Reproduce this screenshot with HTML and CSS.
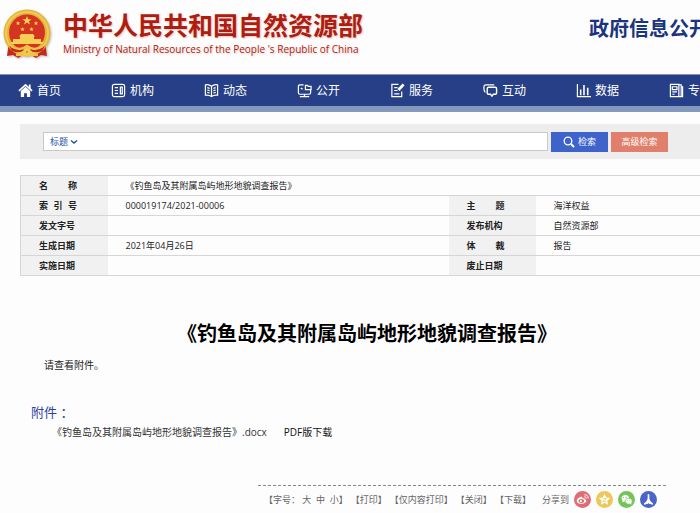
FILE: index.html
```html
<!DOCTYPE html>
<html lang="zh-CN">
<head>
<meta charset="utf-8">
<title>中华人民共和国自然资源部</title>
<link rel="stylesheet" href="styles.css">
</head>
<body>
<header class="header">
  <svg class="emblem" viewBox="0 0 50 54" aria-hidden="true">
    <path d="M7 33 5 48l6-1 5 3 5-3h8l5 3 5-3 6 1-2-15z" fill="#c42a1c"/>
    <circle cx="25" cy="25" r="23.5" fill="#e2b437"/>
    <circle cx="25" cy="25" r="21" fill="none" stroke="#f0cb57" stroke-width="2"/>
    <circle cx="25" cy="24.500" r="18" fill="#d53423"/>
    <path d="m25 8 1.200 3.200h3.400l-2.700 2 1 3.300-2.900-2-2.900 2 1-3.300-2.700-2h3.400z" fill="#ffd84b"/>
    <path d="m16 13 .6 1.400 1.500.1-1.100 1 .4 1.500-1.400-.8-1.300.8.3-1.500-1.100-1 1.500-.1zM34 13l.6 1.400 1.500.1-1.100 1 .4 1.500-1.400-.8-1.300.8.3-1.500-1.100-1 1.500-.1zM20.500 19l.6 1.400 1.500.1-1.100 1 .4 1.500-1.400-.8-1.300.8.3-1.500-1.100-1 1.500-.1zM29.500 19l.6 1.400 1.500.1-1.100 1 .4 1.500-1.400-.8-1.300.8.3-1.500-1.100-1 1.500-.1z" fill="#ffd84b"/>
    <path d="M19 26h12l2 2.500h-1V31h7v3h2v2H9v-2h2v-3h7v-2.500h-1z" fill="#f6cf54"/>
    <path d="M7 38q10 5 18 0 8 5 18 0l-3 5q-8 3-15-1-7 4-15 1z" fill="#c42a1c"/>
    <path d="M9 38q9 6 16 0 7 6 16 0M14 47q7 0 11-6 4 6 11 6" fill="none" stroke="#edc247" stroke-width="2.500"/>
    <path d="M17 48h16l-3-5H20z" fill="#edc247"/>
    <circle cx="25" cy="44" r="4" fill="#f0c94e"/>
    <circle cx="25" cy="44" r="1" fill="#c98b25"/>
  </svg>
  <div class="brand">
    <h1 class="brand-name">中华人民共和国自然资源部</h1>
    <p class="brand-en">Ministry of Natural Resources of the People 's Republic of China</p>
  </div>
  <p class="section-name">政府信息公开</p>
</header>

<nav class="nav">
  <a class="nav-item" href="#"><svg class="nav-icon" viewBox="0 0 16 16"><path d="M1 8.500 8 2l7 6.500" fill="none" stroke="#fff" stroke-width="1.800"/><path d="M11.500 1.500h2V7l-2-2zM3 8.500l5-4.500 5 4.500V15H9.500v-4h-3v4H3z" fill="#fff"/></svg>首页</a>
  <a class="nav-item" href="#"><svg class="nav-icon line" viewBox="0 0 16 16"><rect x="1.500" y="1.500" width="13" height="13" rx="2"/><path d="M4 5h3.500M4 8h3.500M4 11h3.500M10 4.500h2v7h-2z"/></svg>机构</a>
  <a class="nav-item" href="#"><svg class="nav-icon line" viewBox="0 0 16 16"><path d="M8 3.500Q5 1 1.500 2v11q4-.5 6.500 1.500 2.500-2 6.500-1.500V2Q11 1 8 3.500zv11M3.500 5l2.500.7M3.500 7.500l2.500.7M3.500 10l2.500.7M12.500 5l-2.500.7M12.500 7.500l-2.500.7M12.500 10l-2.500.7"/></svg>动态</a>
  <a class="nav-item" href="#"><svg class="nav-icon line" viewBox="0 0 16 16"><path d="M7 2H3Q1.500 2 1.500 3.500v7Q1.500 12 3 12h10q1.500 0 1.500-1.500V7M9 2.500h2l1 1h3V7H9zM4 5.500l2 1M8 12v2.500M3 14.500h10"/></svg>公开</a>
  <a class="nav-item" href="#"><svg class="nav-icon line" viewBox="0 0 16 16"><path d="M9 1.500H2v13h10.500V9M4.500 5H8M4.500 8H8M4.500 11.500H10"/><path d="m9 7.500 5.500-6" stroke-width="3"/></svg>服务</a>
  <a class="nav-item" href="#"><svg class="nav-icon line" viewBox="0 0 16 16"><path d="M2.500 10Q1 8.500 1 6V4q0-2 2-2h9"/><path d="M6 4.500h7q1.500 0 1.500 1.500v4q0 2-2 2H11l-1.500 2L8 12H6.500q-2 0-2-2V6Q4.500 4.500 6 4.500z" stroke-width="1.500"/></svg>互动</a>
  <a class="nav-item" href="#"><svg class="nav-icon line" viewBox="0 0 16 16"><path d="M1.500 1v13.500H16"/><path d="M5 7v6M8.500 2v11M12.500 5v8" stroke-width="1.700"/></svg>数据</a>
  <a class="nav-item" href="#"><svg class="nav-icon line" viewBox="0 0 16 16"><path d="M1.500 1.500h9v13h-9zM10.500 2h2.500v12.500h-2.500M13 4h1.500v10.500H13M3.500 4h5v3h-5zM3.500 9.500h5M3.500 12H6"/></svg>专</a>
</nav>

<main class="main">
  <form class="search">
    <div class="search-field">
      <label class="search-type">
        <select class="type-select" aria-label="检索范围"><option>标题</option></select>
        <svg class="chevron" viewBox="0 0 8 6"><path d="m1 1.500 3 2.500 3-2.500" fill="none" stroke="#2450a8" stroke-width="1.500"/></svg>
      </label>
      <input class="search-input" type="text" aria-label="检索词">
    </div>
    <button class="btn" type="button"><svg class="btn-icon" viewBox="0 0 12 12"><circle cx="5" cy="5" r="3.800" fill="none" stroke="#fff" stroke-width="1.300"/><path d="m8 8 3 3" stroke="#fff" stroke-width="2"/></svg>检索</button>
    <button class="btn btn-advanced" type="button">高级检索</button>
  </form>

  <table class="info">
    <colgroup><col class="col-label"><col class="col-wide"><col class="col-label"><col></colgroup>
    <tr><th scope="row"><span class="label">名<i></i>称</span></th><td colspan="3">《钓鱼岛及其附属岛屿地形地貌调查报告》</td></tr>
    <tr><th scope="row"><span class="label">索<i></i>引<i></i>号</span></th><td>000019174/2021-00006</td><th scope="row"><span class="label">主<i></i>题</span></th><td>海洋权益</td></tr>
    <tr><th scope="row">发文字号</th><td></td><th scope="row">发布机构</th><td>自然资源部</td></tr>
    <tr><th scope="row">生成日期</th><td>2021年04月26日</td><th scope="row"><span class="label">体<i></i>裁</span></th><td>报告</td></tr>
    <tr><th scope="row">实施日期</th><td></td><th scope="row">废止日期</th><td></td></tr>
  </table>

  <article class="article">
    <h2 class="title">《钓鱼岛及其附属岛屿地形地貌调查报告》</h2>
    <p class="text">请查看附件。</p>
    <h3 class="files-title">附件 ：</h3>
    <p class="files"><a class="file" href="#">《钓鱼岛及其附属岛屿地形地貌调查报告》.docx</a><a class="file file-pdf" href="#">PDF版下载</a></p>
  </article>

  <footer class="tools">
    <span class="font-size">【字号： <a href="#">大</a> &nbsp;<a href="#">中</a> &nbsp;<a href="#">小</a>】</span>
    <a href="#">【打印】</a>
    <a href="#">【仅内容打印】</a>
    <a href="#">【关闭】</a>
    <a href="#">【下载】</a>
    <div class="share">
      <span>分享到</span>
      <a href="#" aria-label="微博"><svg class="share-icon" viewBox="0 0 18 18"><circle cx="9" cy="9" r="9" fill="#e16b72"/><path d="M7.500 6C5 6.500 2.500 9 3 11c.5 2 3.500 3 6 2.500s4.500-2 4-3.500c-.3-1-1.500-1-1.500-1s.5-2-2.500-1C9 6.500 8.500 5.800 7.500 6z" fill="#fff"/><ellipse cx="7.800" cy="10.600" rx="3" ry="2" fill="#e16b72"/><circle cx="7.300" cy="10.700" r="1.100" fill="#fff"/><path d="M11 4q4-.5 4 4M11 6q2-.2 2 2" fill="none" stroke="#fff"/></svg></a>
      <a href="#" aria-label="QQ空间"><svg class="share-icon" viewBox="0 0 18 18"><circle cx="9" cy="9" r="9" fill="#ecc85b"/><path d="m9 3 1.800 3.800 4.200.6-3 2.900.7 4.200L9 12.500l-3.700 2 .7-4.200-3-2.900 4.200-.6z" fill="#fff"/><path d="M7 8h4l-4 3h4" fill="none" stroke="#ecc85b" stroke-width=".8"/></svg></a>
      <a href="#" aria-label="微信"><svg class="share-icon" viewBox="0 0 18 18"><circle cx="9" cy="9" r="9" fill="#73c557"/><path d="m4.500 12 .3-2a4 3.500 0 1 1 2 1z" fill="#fff"/><ellipse cx="11.300" cy="10.800" rx="3.700" ry="3" fill="#fff" stroke="#73c557" stroke-width=".7"/><path d="m12 13 2 1.500v-2.500z" fill="#fff"/><g fill="#73c557"><circle cx="5.800" cy="6.800" r=".6"/><circle cx="8.500" cy="6.800" r=".6"/><circle cx="10.200" cy="10.200" r=".5"/><circle cx="12.500" cy="10.200" r=".5"/></g></svg></a>
      <a href="#" aria-label="人人网"><svg class="share-icon" viewBox="0 0 18 18"><circle cx="9" cy="9" r="9" fill="#4a64c8"/><path d="M9 3.500v4q-.3 4-4.500 6.500M9 7.500q.3 4 4.500 6.500M7 13.500l2-2 2 2" fill="none" stroke="#fff" stroke-width="1.800"/></svg></a>
    </div>
  </footer>
</main>
</body>
</html>
```
FILE: styles.css
```css
* {
  box-sizing: border-box;
}

body {
  margin: 0;
  overflow: hidden;
  background: #fdfdfd;
  color: #222;
  font: 9px/16px "Open Sans", "Noto Sans CJK SC", sans-serif;
}

h1, h2, h3, p {
  margin: 0;
}

a {
  color: inherit;
  text-decoration: none;
}

.header {
  display: flex;
  align-items: flex-start;
  height: 74px;
  padding: 8px 0 0 2px;
  white-space: nowrap;
}

.emblem {
  flex: none;
  width: 50px;
  height: 54px;
  filter: drop-shadow(1px 1px 1px #bbb);
}

.brand {
  flex: none;
  width: 537px;
  padding: 1px 0 0 11px;
  color: #b01c10;
  text-shadow: 1px 1px 2px #e0c4c0;
}

.brand-name {
  font-size: 25px;
  line-height: 32px;
}

.brand-en {
  font-size: 10px;
  line-height: 16px;
}

.section-name {
  padding-top: 7px;
  color: #1b347f;
  font-size: 20px;
  font-weight: 700;
  line-height: 28px;
}

.nav {
  display: flex;
  height: 38px;
  padding-left: 18px;
  background: #263f86;
  border-top: 1px solid #8294bd;
  border-bottom: 6px solid #8398bd;
}

.nav-item {
  display: flex;
  flex: 0 0 93px;
  align-items: center;
  gap: 4px;
  color: #fff;
  font-size: 12px;
}

.nav-icon {
  flex: none;
  width: 15px;
  height: 15px;
}

.line {
  fill: none;
  stroke: #fff;
  stroke-width: 1.3;
}

.main {
  padding: 12px 0 0 20px;
}

.search {
  display: flex;
  gap: 3px;
  height: 35px;
  padding: 8px 32px 7px 23px;
  background: #ededed;
}

.search-field {
  display: flex;
  flex: 1;
  height: 19px;
  background: #fff;
  border: 1px solid #c9c9c9;
}

.search-type {
  display: flex;
  align-items: center;
  padding-left: 6px;
}

.type-select {
  appearance: none;
  padding: 0;
  background: none;
  border: 0;
  color: #2450a8;
  font: inherit;
}

.chevron {
  width: 8px;
  height: 6px;
  margin-left: 1px;
}

.search-input {
  flex: 1;
  min-width: 0;
  padding: 0 6px;
  background: none;
  border: 0;
  font: inherit;
}

.btn {
  display: flex;
  align-items: center;
  justify-content: center;
  gap: 3px;
  width: 57px;
  height: 20px;
  padding: 0;
  background: #3e63cb;
  border: 0;
  color: #fff;
  font: inherit;
}

.btn-icon {
  width: 12px;
  height: 12px;
}

.btn-advanced {
  background: #e07f6b;
}

.info {
  width: 100%;
  margin-top: 16px;
  border-collapse: collapse;
  table-layout: fixed;
}

.col-label {
  width: 87px;
}

.col-wide {
  width: 341px;
}

.info tr {
  height: 20px;
  border: solid #d6d6d6;
  border-width: 1px 0 1px 1px;
}

.info th,
.info td {
  padding: 0 0 0 18px;
  text-align: left;
}

.info th {
  background: #f1f1f1;
}

.label {
  display: flex;
  justify-content: space-between;
  width: 38px;
}

.article {
  padding: 43px 0 45px;
}

.title {
  margin-right: -14px;
  color: #000;
  font-size: 20px;
  line-height: 30px;
  text-align: center;
}

.text {
  margin-top: 8px;
  padding-left: 24px;
  font-size: 10px;
}

.files-title {
  margin-top: 29px;
  padding-left: 11px;
  color: #2f3fa0;
  font-size: 13px;
  font-weight: 400;
  line-height: 20px;
}

.files {
  display: flex;
  gap: 17px;
  padding: 2px 0 0 32px;
  font-size: 10px;
}

.file {
  color: #333;
}

.file-pdf {
  color: #111;
}

.tools {
  display: flex;
  align-items: center;
  justify-content: space-between;
  width: 408px;
  margin: 0 34px 0 auto;
  padding: 5px 9px 0 6px;
  border-top: 1px dashed #888;
  color: #666;
  white-space: nowrap;
}

.share {
  display: flex;
  align-items: center;
  gap: 5px;
  margin-left: 8px;
}

.share-icon {
  display: block;
  width: 17px;
  height: 17px;
}
```
